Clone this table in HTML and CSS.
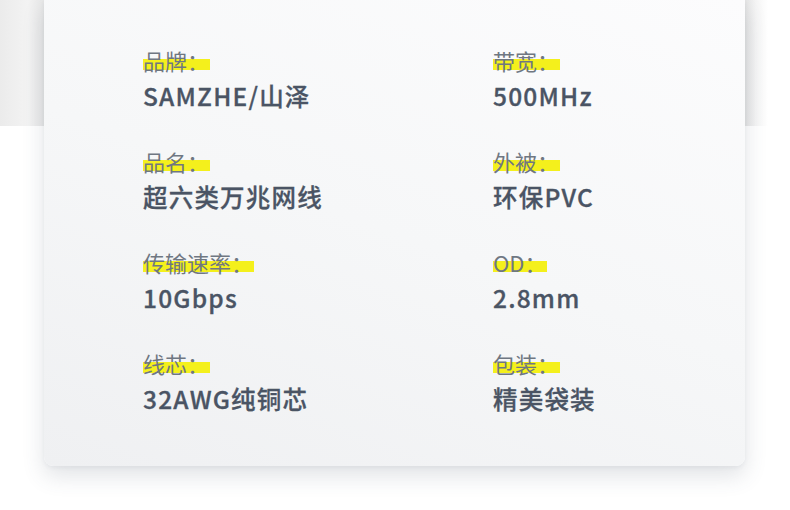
FILE: index.html
```html
<!DOCTYPE html>
<html lang="zh-CN">
<head>
<meta charset="utf-8">
<link rel="stylesheet" href="styles.css">
</head>
<body>
<div class="page">
  <div class="card">
    <div class="specs">
      <div class="item"><div class="label"><span class="mark">品牌：</span></div><div class="value">SAMZHE/山泽</div></div>
      <div class="item"><div class="label"><span class="mark">带宽：</span></div><div class="value">500MHz</div></div>
      <div class="item"><div class="label"><span class="mark">品名：</span></div><div class="value">超六类万兆网线</div></div>
      <div class="item"><div class="label"><span class="mark">外被：</span></div><div class="value">环保PVC</div></div>
      <div class="item"><div class="label"><span class="mark">传输速率：</span></div><div class="value">10Gbps</div></div>
      <div class="item"><div class="label"><span class="mark">OD：</span></div><div class="value">2.8mm</div></div>
      <div class="item"><div class="label"><span class="mark">线芯：</span></div><div class="value">32AWG纯铜芯</div></div>
      <div class="item"><div class="label"><span class="mark">包装：</span></div><div class="value">精美袋装</div></div>
    </div>
  </div>
</div>
</body>
</html>
```

FILE: styles.css
```css
html, body {
  margin: 0;
  padding: 0;
}
body {
  width: 790px;
  height: 510px;
  overflow: hidden;
  background:
    linear-gradient(90deg, #ebebeb 0px, #f3f3f3 28px, #e7e7e7 44px, #e6e6e6 746px, #f5f5f5 756px, #ffffff 768px) top left / 100% 126px no-repeat,
    #ffffff;
  font-family: "Noto Sans CJK SC", "Noto Sans", sans-serif;
}
.page {
  padding-left: 44px;
}
.card {
  width: 701px;
  height: 466px;
  box-sizing: border-box;
  border-radius: 0 0 9px 9px;
  background: linear-gradient(200deg, #fcfcfd 0%, #f6f7f8 50%, #eff0f2 100%);
  box-shadow: 0 10px 22px rgba(70, 80, 100, 0.16), 0 2px 4px rgba(70, 80, 100, 0.06);
  padding: 48px 0 0 99px;
}
.specs {
  display: grid;
  grid-template-columns: 350px 250px;
  row-gap: 38px;
}
.label {
  font-size: 22px;
  line-height: 25px;
  height: 25px;
  color: #6f7782;
}
.mark {
  background: linear-gradient(180deg, transparent 0%, transparent 46%, #f4f01c 46%, #f4f01c 82%, transparent 82%);
  padding-right: 1px;
}
.value {
  margin-top: 8px;
  font-size: 24.5px;
  line-height: 30px;
  font-weight: 500;
  -webkit-text-stroke: 0.3px #4a5464;
  color: #4a5464;
  letter-spacing: 1.2px;
}
```
